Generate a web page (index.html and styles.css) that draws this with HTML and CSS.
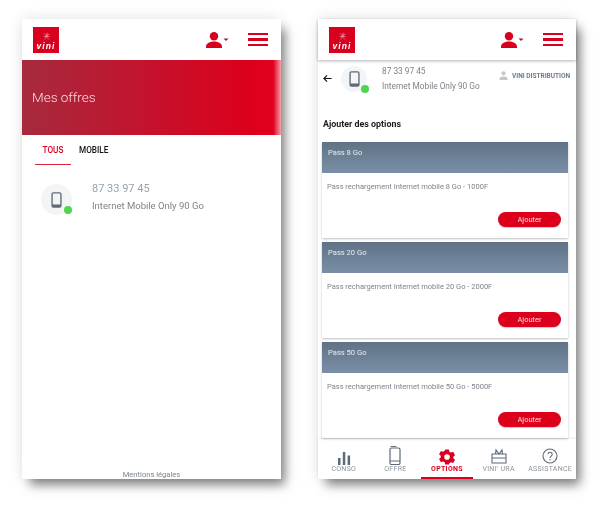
FILE: index.html
```html
<!DOCTYPE html>
<html lang="fr">
  <head>
    <meta charset="UTF-8" />
    <title>Vini - Mes offres</title>
    <link rel="stylesheet" href="styles.css">
  </head>
  <body>
    <div class="screens">
      <!-- Mes offres -->
      <div class="phone">
        <div class="top-bar">
          <div class="logo">
            <svg class="logo-mark" viewBox="0 0 12 12"><path d="M3 2 9 10M3.500 10 8 2M6.500 1v5M2 6h8M7 5l3-2" fill="none" stroke="#fbd5da" stroke-width=".6"/></svg>
            <span class="logo-text">vini</span>
          </div>
          <div class="top-icons">
            <svg class="user-icon" viewBox="0 0 23 16"><circle cx="8" cy="4.200" r="4.200" fill="#d9001f"/><path d="M0 16v-1.500C0 11 4.500 9.400 8 9.400s8 1.600 8 5.100V16z" fill="#d9001f"/><path d="M17.500 6.500h5l-2.500 2.500z" fill="#8a2030"/></svg>
            <div class="burger"><span></span><span></span><span></span></div>
          </div>
        </div>
        <div class="banner">Mes offres</div>
        <div class="tabs">
          <div class="tab active">TOUS</div>
          <div class="tab">MOBILE</div>
        </div>
        <div class="offer">
          <div class="device-badge big">
            <svg class="device-icon" viewBox="0 0 12 18"><rect x="1" y="1" width="10" height="16" rx="1.600" fill="none" stroke="#5d6b78" stroke-width="1.500"/><path d="M1 14h10v2a1 1 0 0 1-1 1H2a1 1 0 0 1-1-1z" fill="#5d6b78"/></svg>
            <span class="status-dot"></span>
          </div>
          <div>
            <div class="offer-number">87 33 97 45</div>
            <div class="offer-name">Internet Mobile Only 90 Go</div>
          </div>
        </div>
        <div class="legal">Mentions légales</div>
      </div>

      <!-- Ajouter des options -->
      <div class="phone narrow">
        <div class="top-bar raised">
          <div class="logo">
            <svg class="logo-mark" viewBox="0 0 12 12"><path d="M3 2 9 10M3.500 10 8 2M6.500 1v5M2 6h8M7 5l3-2" fill="none" stroke="#fbd5da" stroke-width=".6"/></svg>
            <span class="logo-text">vini</span>
          </div>
          <div class="top-icons">
            <svg class="user-icon" viewBox="0 0 23 16"><circle cx="8" cy="4.200" r="4.200" fill="#d9001f"/><path d="M0 16v-1.500C0 11 4.500 9.400 8 9.400s8 1.600 8 5.100V16z" fill="#d9001f"/><path d="M17.500 6.500h5l-2.500 2.500z" fill="#8a2030"/></svg>
            <div class="burger"><span></span><span></span><span></span></div>
          </div>
        </div>
        <div class="line-head">
          <svg class="back-arrow" viewBox="0 0 10 10"><path d="M9.500 5H1M4.500 1.500 1 5l3.500 3.500" fill="none" stroke="#111" stroke-width="1.200"/></svg>
          <div class="device-badge">
            <svg class="device-icon" viewBox="0 0 12 18"><rect x="1" y="1" width="10" height="16" rx="1.600" fill="none" stroke="#5d6b78" stroke-width="1.500"/><path d="M1 14h10v2a1 1 0 0 1-1 1H2a1 1 0 0 1-1-1z" fill="#5d6b78"/></svg>
            <span class="status-dot"></span>
          </div>
          <div class="line-text">
            <div class="line-number">87 33 97 45</div>
            <div class="line-name">Internet Mobile Only 90 Go</div>
          </div>
          <div class="account">
            <svg class="account-icon" viewBox="0 0 10 10"><circle cx="5" cy="2.600" r="2.300" fill="#c3c8cd"/><path d="M.5 10V8.500c0-1.800 2.500-2.500 4.500-2.500s4.500.7 4.500 2.500V10z" fill="#c3c8cd"/></svg>
            VINI DISTRIBUTION
          </div>
        </div>
        <div class="options">
          <div class="options-title">Ajouter des options</div>
          <div class="card">
            <div class="card-head">Pass 8 Go</div>
            <div class="card-body">
              <div class="card-text">Pass rechargement Internet mobile 8 Go - 1000F</div>
              <div class="add-btn">Ajouter</div>
            </div>
          </div>
          <div class="card">
            <div class="card-head">Pass 20 Go</div>
            <div class="card-body">
              <div class="card-text">Pass rechargement Internet mobile 20 Go - 2000F</div>
              <div class="add-btn">Ajouter</div>
            </div>
          </div>
          <div class="card">
            <div class="card-head">Pass 50 Go</div>
            <div class="card-body">
              <div class="card-text">Pass rechargement Internet mobile 50 Go - 5000F</div>
              <div class="add-btn">Ajouter</div>
            </div>
          </div>
        </div>
        <div class="bottom-nav">
          <div class="nav-item">
            <svg class="nav-icon" viewBox="0 0 20 20"><path d="M4 13h2.500v7H4zM8.800 7h2.500v13H8.800zM13.600 10.500h2.500V20h-2.500z" fill="#5d6b78"/></svg>
            CONSO
          </div>
          <div class="nav-item">
            <svg class="nav-icon" viewBox="0 0 20 20"><path d="M5.500 1.500h6" stroke="#6f7a84" stroke-width="1"/><rect x="5" y="3" width="10" height="16.500" rx="1.500" fill="none" stroke="#5d6b78" stroke-width="1.200"/><path d="M5 16h10" stroke="#5d6b78" stroke-width="1"/></svg>
            OFFRE
          </div>
          <div class="nav-item active">
            <svg class="nav-icon" viewBox="-0.700 -2.800 21.300 21.300"><path d="M8 2h4l.5 2.400 1.600.9 2.400-.8 2 3.500-1.800 1.600v1.800l1.800 1.600-2 3.500-2.400-.8-1.600.9L12 18H8l-.5-2.400-1.600-.9-2.400.8-2-3.500 1.800-1.600V8.600L1.500 7l2-3.500 2.400.8 1.600-.9z M10 7a3 3 0 1 0 0 6 3 3 0 0 0 0-6z" fill="#d9001f" fill-rule="evenodd"/></svg>
            OPTIONS
          </div>
          <div class="nav-item">
            <svg class="nav-icon" viewBox="0 0 20 20"><path d="M3 9h14v9H3zM3 13h14M6.500 9 7 5l3 4 3-4 .5 4" fill="none" stroke="#5d6b78" stroke-width="1.100"/></svg>
            VINI' URA
          </div>
          <div class="nav-item">
            <svg class="nav-icon" viewBox="0 0 20 20"><circle cx="10" cy="11" r="7" fill="none" stroke="#5d6b78" stroke-width="1.100"/><path d="M8 9.300a2.100 2.100 0 1 1 3.200 1.800c-.8.500-1.200.9-1.200 1.800" fill="none" stroke="#5d6b78" stroke-width="1.100"/><circle cx="10" cy="14.700" r=".7" fill="#5d6b78"/></svg>
            ASSISTANCE
          </div>
        </div>
      </div>
    </div>
  </body>
</html>
```

FILE: styles.css
```css
* {
  box-sizing: border-box;
  margin: 0;
  padding: 0;
}

body {
  min-height: 100vh;
  font-family: Roboto, Arial, sans-serif;
  background-color: #fff;
}

.screens {
  display: flex;
  gap: 37px;
  min-height: 508px;
  padding: 19px 0 0 22px;
  filter: blur(0.3px);
}

.phone {
  display: flex;
  flex-direction: column;
  width: 259px;
  height: 460px;
  background-color: #fff;
  box-shadow: 6px 8px 10px -2px rgba(40, 40, 40, 0.55), 0 0 14px rgba(0, 0, 0, 0.12);
}

.phone.narrow {
  width: 258px;
}

/* header */
.top-bar {
  display: flex;
  justify-content: space-between;
  align-items: center;
  height: 41px;
  padding: 0 13px 0 11px;
  flex-shrink: 0;
}

.top-bar.raised {
  box-shadow: 0 1px 3px rgba(0, 0, 0, 0.3);
}

.logo {
  display: flex;
  flex-direction: column;
  align-items: center;
  width: 26px;
  height: 26px;
  background-color: #d9001f;
  color: #fff;
}

.logo-mark {
  width: 9px;
  height: 9px;
  margin-top: 5px;
}

.logo-text {
  margin-top: 1px;
  font-family: "Liberation Sans", Arial, sans-serif;
  font-size: 8.500px;
  font-weight: bold;
  font-style: italic;
  line-height: 8px;
  letter-spacing: 1.100px;
}

.top-icons {
  display: flex;
  align-items: center;
  gap: 19px;
}

.user-icon {
  width: 23px;
  height: 16px;
  display: block;
}

.burger {
  display: flex;
  flex-direction: column;
  gap: 3px;
  width: 20px;
}

.burger span {
  height: 2.500px;
  background-color: #d9001f;
}

/* banner */
.banner {
  display: flex;
  align-items: center;
  height: 75px;
  padding: 0 10px 1px;
  flex-shrink: 0;
  font-size: 13.500px;
  font-weight: 300;
  color: #f9dfe3;
  background: linear-gradient(90deg, #a62a3d 0%, #c2142e 45%, #dc001c 88%, #e2001e 97%, #f0a0aa 100%);
}

/* tabs */
.tabs {
  display: flex;
  height: 30px;
  padding-left: 13px;
  flex-shrink: 0;
}

.tab {
  padding-top: 10px;
  margin-right: 8px;
  font-size: 8.200px;
  font-weight: 500;
  color: #111;
}

.tab.active {
  width: 36px;
  text-align: center;
  color: #d9001f;
  border-bottom: 1.500px solid #e0233a;
}

/* offer row */
.offer {
  display: flex;
  align-items: flex-start;
  gap: 20px;
  padding: 19px 0 0 19px;
}

.device-badge {
  position: relative;
  display: flex;
  justify-content: center;
  align-items: center;
  width: 26px;
  height: 26px;
  border-radius: 50%;
  background-color: #f3f4f5;
  flex-shrink: 0;
}

.device-badge.big {
  width: 31px;
  height: 31px;
}

.device-icon {
  width: 11px;
  height: 16px;
}

.status-dot {
  position: absolute;
  right: -2px;
  bottom: -1px;
  width: 8px;
  height: 8px;
  border-radius: 50%;
  background-color: #4bd650;
}

.big .status-dot {
  right: 0;
  bottom: 1px;
}

.offer-number {
  font-size: 11px;
  line-height: 10px;
  color: #98a3ae;
}

.offer-name {
  margin-top: 6px;
  font-size: 9.500px;
  line-height: 12px;
  color: #7f8388;
}

.legal {
  margin-top: auto;
  font-size: 7.600px;
  line-height: 9px;
  text-align: center;
  color: #7c848c;
}

/* line header, right screen */
.line-head {
  display: flex;
  align-items: flex-start;
  height: 47px;
  padding: 6px 6px 0 5px;
  flex-shrink: 0;
}

.back-arrow {
  width: 9px;
  height: 9px;
  margin: 8px 9px 0 0;
}

.line-text {
  margin-left: 15px;
  font-size: 8.300px;
  color: #7f8388;
}

.line-number {
  line-height: 10px;
}

.line-name {
  margin-top: 4px;
  line-height: 12px;
}

.account {
  display: flex;
  align-items: center;
  gap: 4px;
  margin: 5px 0 0 auto;
  font-size: 6.500px;
  font-weight: 700;
  color: #6d7a8c;
  white-space: nowrap;
}

.account-icon {
  width: 9px;
  height: 9px;
}

/* options */
.options {
  flex: 1;
  padding: 11px 8px 0 4px;
}

.options-title {
  height: 24px;
  padding: 1px 0 0 1px;
  font-size: 8.900px;
  font-weight: 700;
  line-height: 11px;
  color: #1b1b1b;
}

.card {
  height: 96px;
  margin-bottom: 4.200px;
  background-color: #fff;
  box-shadow: 0 1px 2px rgba(0, 0, 0, 0.25);
}

.card:last-child {
  margin-bottom: 0;
}

.card-head {
  height: 31px;
  padding: 6px 6px 0;
  font-size: 7.600px;
  line-height: 10px;
  color: #e9edf1;
  background: linear-gradient(180deg, #5f7286 0%, #7a8fa7 100%);
}

.card-body {
  display: flex;
  flex-direction: column;
  height: 65px;
  padding: 9px 7px 11px 5px;
}

.card-text {
  font-size: 7.500px;
  line-height: 10px;
  color: #7d838b;
}

.add-btn {
  align-self: flex-end;
  width: 63px;
  height: 15.500px;
  margin-top: auto;
  border-radius: 8px;
  font-size: 7.500px;
  line-height: 15.500px;
  text-align: center;
  color: #f7d9dd;
  background-color: #dc001c;
  box-shadow: 0 1px 1px rgba(0, 0, 0, 0.2);
}

/* bottom nav */
.bottom-nav {
  display: flex;
  height: 40px;
  flex-shrink: 0;
  box-shadow: 0 -1px 2px rgba(0, 0, 0, 0.08);
}

.nav-item {
  display: flex;
  flex: 1;
  flex-direction: column;
  align-items: center;
  min-width: 0;
  padding-top: 6px;
  font-size: 7px;
  line-height: 9px;
  letter-spacing: 0.300px;
  color: #8b949c;
  white-space: nowrap;
}

.nav-item.active {
  font-weight: 700;
  color: #d9001f;
  border-bottom: 2px solid #d9001f;
}

.nav-icon {
  width: 20px;
  height: 20px;
  flex-shrink: 0;
}
```
